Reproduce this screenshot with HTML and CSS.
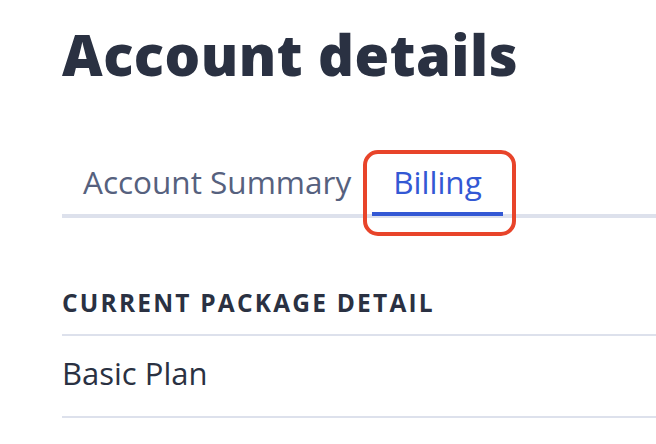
FILE: index.html
```html
<!DOCTYPE html>
<html>
<head>
<meta charset="utf-8">
<link rel="stylesheet" href="styles.css">
</head>
<body>
<main class="page">
  <h1 class="title">Account details</h1>
  <nav class="tabs">
    <div class="tab">Account Summary</div>
    <div class="tab tab-active">Billing<span class="highlight"></span></div>
  </nav>
  <section class="package">
    <h2 class="section-title">CURRENT PACKAGE DETAIL</h2>
    <div class="row">Basic Plan</div>
  </section>
</main>
</body>
</html>
```
FILE: styles.css
```css
html, body {
  margin: 0;
  padding: 0;
  background: #ffffff;
}
body {
  font-family: "Open Sans", "Noto Sans", sans-serif;
  overflow: hidden;
}
.page {
  padding: 0 0 0 62px;
}
.title {
  margin: 0;
  padding-top: 19px;
  font-size: 56px;
  line-height: 70px;
  font-weight: 800;
  letter-spacing: 0.5px;
  color: #2a3142;
}
.tabs {
  display: flex;
  margin-top: 73px;
  border-bottom: 4px solid #dde1ec;
}
.tab {
  position: relative;
  padding: 0 21px 10px;
  font-size: 31.5px;
  line-height: 40px;
  color: #56617e;
}
.tab-active {
  color: #3358d4;
  border-bottom: 4px solid #3358d4;
  margin-bottom: -2px;
}
.highlight {
  position: absolute;
  left: -9px;
  right: -13px;
  top: -12px;
  bottom: -24px;
  border: 4px solid #e8442a;
  border-radius: 15px;
}
.package {
  margin-top: 73px;
}
.section-title {
  margin: 0;
  padding-bottom: 19px;
  font-size: 24.5px;
  line-height: 24px;
  font-weight: 700;
  letter-spacing: 2.2px;
  color: #2a3142;
  border-bottom: 2px solid #dde1ec;
}
.row {
  font-size: 31px;
  line-height: 74px;
  padding-bottom: 6px;
  color: #2a3142;
  border-bottom: 2px solid #dde1ec;
}
```
